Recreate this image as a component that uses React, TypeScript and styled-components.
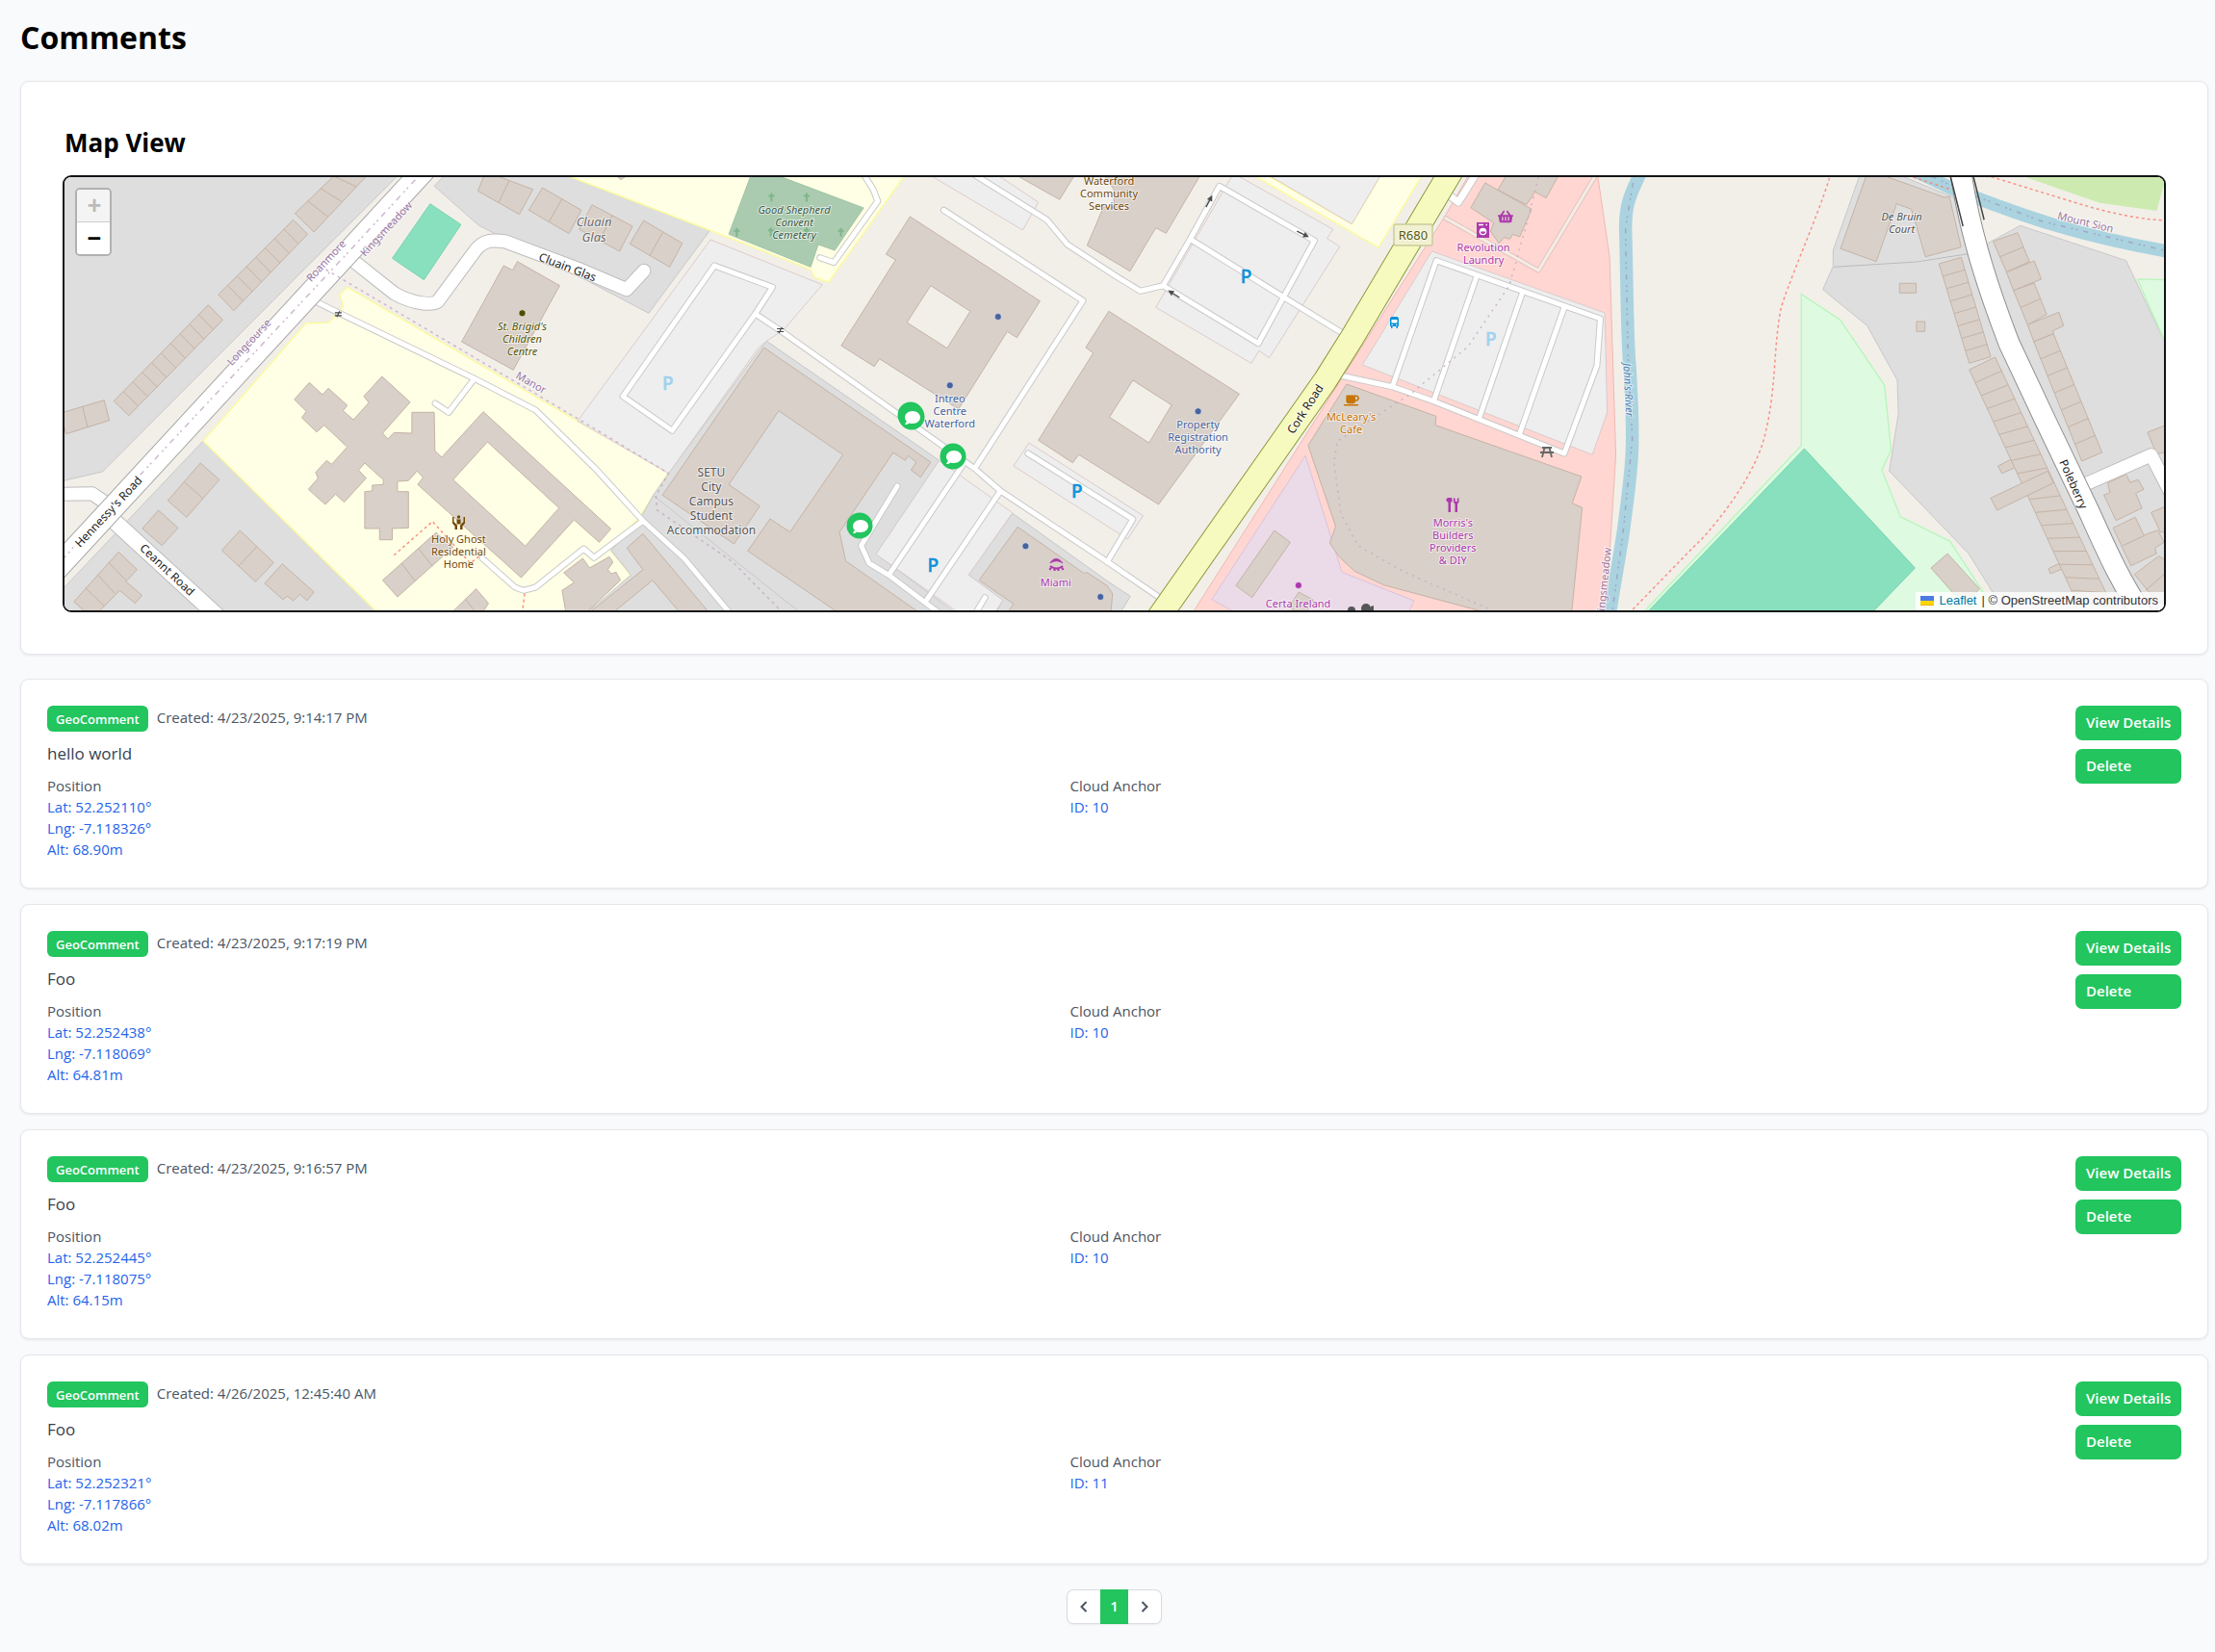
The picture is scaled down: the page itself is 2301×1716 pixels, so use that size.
import React from "react";
import styled, { createGlobalStyle } from "styled-components";
import { FaComment, FaShoppingBasket, FaCoffee } from "react-icons/fa";

/* ---------- page ---------- */

const sans = `"Open Sans", "Noto Sans", sans-serif`;
const green = "#22c55e";

const GlobalStyle = createGlobalStyle`
  *, *::before, *::after { box-sizing: border-box; }
  body { margin: 0; background: #f9fafb; font-family: ${sans}; color: #000; }
  h1, h2, p, ul, dl, dd { margin: 0; padding: 0; }
  button { font-family: inherit; border: 0; cursor: pointer; }
`;

const Page = styled.main`
  min-height: 100vh;
  padding: 18px 7px 28px 21px;
`;

const PageTitle = styled.h1`
  font-size: 32px;
  line-height: 42px;
  font-weight: 700;
  margin-bottom: 24px;
`;

const Card = styled.section`
  background: #fff;
  border: 1px solid #e5e7eb;
  border-radius: 9px;
  box-shadow: 0 1px 3px rgba(0, 0, 0, 0.08);
`;

const MapCard = styled(Card)`
  padding: 43px;
  margin-bottom: 25px;
`;

const MapTitle = styled.h2`
  font-size: 26px;
  line-height: 36px;
  font-weight: 700;
  padding-left: 2px;
  margin: 2px 0 16px;
`;

const MapFrame = styled.div`
  position: relative;
  height: 454px;
  border: 2px solid #111417;
  border-radius: 9px;
  overflow: hidden;
  background: #f2efe9;
`;

const MapCanvas = styled.svg`
  display: block;
  width: 100%;
  height: 100%;
`;

const ZoomControl = styled.div`
  position: absolute;
  top: 11px;
  left: 11px;
  display: flex;
  flex-direction: column;
  border: 2px solid rgba(0, 0, 0, 0.2);
  border-radius: 5px;
  background-clip: padding-box;
  overflow: hidden;
`;

const ZoomButton = styled.button<{ $off?: boolean }>`
  width: 34px;
  height: ${(p) => (p.$off ? 34 : 33)}px;
  padding: 4px 0 0 2px;
  display: flex;
  align-items: center;
  justify-content: center;
  background: ${(p) => (p.$off ? "#f4f4f4" : "#fff")};
  color: ${(p) => (p.$off ? "#bbb" : "#000")};
  border-bottom: ${(p) => (p.$off ? "1px solid #ccc" : "0")};
  font: bold 25px/28px "Liberation Mono", monospace;
`;

const Attribution = styled.div`
  position: absolute;
  right: 0;
  bottom: 0;
  display: flex;
  align-items: center;
  gap: 5px;
  height: 19px;
  padding: 0 6px 2px 5px;
  background: rgba(255, 255, 255, 0.8);
  font: 13px/17px "Liberation Sans", Arial, sans-serif;
  color: #333;
  white-space: pre;
`;

const AttributionLink = styled.a`
  display: inline-flex;
  align-items: center;
  gap: 5px;
  color: #0078a8;
  text-decoration: none;
`;

const CommentList = styled.ul`
  list-style: none;
  display: flex;
  flex-direction: column;
  gap: 16px;
`;

const CommentCard = styled(Card).attrs({ as: "li" })`
  display: flex;
  align-items: flex-start;
  padding: 27px 27px 29px;
`;

const CommentBody = styled.div`
  flex: 1;
  min-width: 0;
`;

const Meta = styled.div`
  display: flex;
  align-items: flex-start;
  gap: 9px;
  margin-bottom: 9px;
  font-size: 15px;
  line-height: 25px;
  color: #4b5563;
`;

const Badge = styled.span`
  padding: 1px 9px 0;
  line-height: 26px;
  border-radius: 6px;
  background: ${green};
  color: #fff;
  font-size: 13px;
  font-weight: 600;
`;

const Message = styled.p`
  font-size: 17px;
  line-height: 27px;
  margin-bottom: 9px;
  color: #374151;
`;

const Facts = styled.dl`
  display: grid;
  grid-template-columns: 1fr 1fr;
  column-gap: 18px;
  font-size: 15px;
  line-height: 22px;
`;

const FactName = styled.dt`
  color: #4b5563;
`;

const FactValue = styled.dd`
  color: #2563eb;
`;

const Actions = styled.div`
  display: flex;
  flex-direction: column;
  gap: 9px;
  width: 110px;
`;

const ActionButton = styled.button`
  height: 36px;
  padding: 0 0 2px 11px;
  text-align: left;
  white-space: nowrap;
  border-radius: 7px;
  background: ${green};
  color: #fff;
  font-size: 15px;
  font-weight: 600;
`;

const Pager = styled.nav`
  display: flex;
  justify-content: center;
  margin-top: 26px;
`;

const PagerBox = styled.div`
  display: flex;
  height: 36px;
  border-radius: 7px;
  box-shadow: 0 1px 2px rgba(0, 0, 0, 0.05);
`;

const PagerArrow = styled.button<{ $side: "left" | "right" }>`
  width: 35px;
  padding: 0;
  display: flex;
  align-items: center;
  justify-content: center;
  background: #fff;
  color: #4b5563;
  border: 1px solid #d9dce3;
  border-${(p) => (p.$side === "left" ? "right" : "left")}: 0;
  border-radius: ${(p) => (p.$side === "left" ? "7px 0 0 7px" : "0 7px 7px 0")};
`;

const PagerPage = styled.button`
  width: 29px;
  padding: 0 0 2px;
  background: ${green};
  color: #fff;
  font-size: 15px;
  font-weight: 600;
`;

/* ---------- map geometry ----------
   The map is digitised on four sheets. A sheet has an origin on the map and a
   horizontal and vertical scale; every "x,y" pair is read on its own sheet. */

type Sheet = { x: number; y: number; sx: number; sy: number };
const A: Sheet = { x: 60, y: 180, sx: 2.8, sy: 3 };
const B: Sheet = { x: 600, y: 180, sx: 2.8, sy: 3 };
const C: Sheet = { x: 1150, y: 180, sx: 2.8, sy: 3 };
const D: Sheet = { x: 1700, y: 180, sx: 2.609, sy: 3 };

const at = (s: Sheet, x: number, y: number) => [
  Math.round((s.x + x / s.sx) * 10) / 10,
  Math.round((s.y + y / s.sy) * 10) / 10,
];

const trace = (s: Sheet, d: string) =>
  d.replace(/(-?[\d.]+),(-?[\d.]+)/g, (_, x, y) => at(s, +x, +y).join(" "));

const area = (s: Sheet, d: string) => "M" + trace(s, d) + "Z";

type AreaProps = { s: Sheet; d: string; fill: string; edge?: string; w?: number };
const Area = ({ s, d, fill, edge = "none", w = 1 }: AreaProps) => (
  <path d={d.split("|").map((p) => area(s, p)).join("")} fill={fill} fillRule="evenodd" stroke={edge} strokeWidth={w} />
);

const Residential = (p: { s: Sheet; d: string }) => <Area {...p} fill="#dedede" edge="#c8c8c8" />;
const School = (p: { s: Sheet; d: string }) => <Area {...p} fill="#ffffe5" edge="#fbfaa0" w={1.5} />;
const Parking = (p: { s: Sheet; d: string }) => <Area {...p} fill="#eeeeee" edge="#dccbcb" />;
const Building = (p: { s: Sheet; d: string }) => <Area {...p} fill="#d9d0c9" edge="#c4b3a6" />;

type LineSet = { s: Sheet; lines: string[] };

const Roads = ({ sets, width, casing = "#c9c9c9", fill = "#fff" }: { sets: LineSet[]; width: number; casing?: string; fill?: string }) => {
  const d = sets.flatMap(({ s, lines }) => lines.map((l) => "M" + trace(s, l))).join("");
  return (
    <g fill="none" strokeLinecap="round" strokeLinejoin="round">
      <path d={d} stroke={casing} strokeWidth={width + 2} />
      <path d={d} stroke={fill} strokeWidth={width} />
    </g>
  );
};

const Boundary = ({ s, d, color = "#c6adc6", dash = "2 4" }: { s: Sheet; d: string; color?: string; dash?: string }) => (
  <path d={"M" + trace(s, d)} fill="none" stroke={color} strokeWidth={1.5} strokeDasharray={dash} opacity={0.85} />
);

/* A terrace of n houses between two long edges, each given start,end. */
type Pt = [number, number];
const Terrace = ({ s, e1, e2, n }: { s: Sheet; e1: [Pt, Pt]; e2: [Pt, Pt]; n: number }) => {
  const mix = (e: [Pt, Pt], t: number) => at(s, e[0][0] + (e[1][0] - e[0][0]) * t, e[0][1] + (e[1][1] - e[0][1]) * t).join(" ");
  let d = `M${mix(e1, 0)}L${mix(e1, 1)} ${mix(e2, 1)} ${mix(e2, 0)}Z`;
  for (let i = 1; i < n; i++) d += `M${mix(e1, i / n)}L${mix(e2, i / n)}`;
  return <path d={d} fill="#d9d0c9" stroke="#c4b3a6" />;
};

const Walls = ({ s, lines }: LineSet) => <path d={lines.map((l) => "M" + trace(s, l)).join("")} stroke="#c4b3a6" fill="none" />;

type LabelProps = {
  s: Sheet; x: number; y: number; text: string[]; color: string;
  size?: number; pitch?: number; turn?: number; italic?: boolean;
};
const Label = ({ s, x, y, text, color, size = 11, pitch = 13, turn = 0, italic }: LabelProps) => {
  const [cx, cy] = at(s, x, y);
  return (
    <text
      transform={`translate(${cx} ${cy}) rotate(${turn})`}
      textAnchor="middle"
      fontFamily='"Noto Sans", "Open Sans", sans-serif'
      fontSize={size}
      fontStyle={italic ? "italic" : "normal"}
      fill={color}
      stroke="rgba(255,255,255,0.6)"
      strokeWidth={2}
      paintOrder="stroke"
    >
      {text.map((t, i) => (
        <tspan key={i} x={0} y={Math.round(size * 0.36) + i * pitch}>{t}</tspan>
      ))}
    </text>
  );
};

const Dot = ({ s, x, y, color = "#4863a0" }: { s: Sheet; x: number; y: number; color?: string }) => {
  const [cx, cy] = at(s, x, y);
  return <circle cx={cx} cy={cy} r={3.5} fill={color} stroke="rgba(255,255,255,0.5)" />;
};

const ParkingSign = ({ s, x, y, pale }: { s: Sheet; x: number; y: number; pale?: boolean }) => {
  const [cx, cy] = at(s, x, y);
  return (
    <text x={cx} y={cy + 7} textAnchor="middle" fontFamily='"Noto Sans", sans-serif' fontSize={19} fontWeight={500}
      fill={pale ? "#9fd2ee" : "#0f92da"} stroke={pale ? "#9fd2ee" : "#0f92da"} strokeWidth={0.5}>P</text>
  );
};

const Gate = ({ s, x, y }: { s: Sheet; x: number; y: number }) => {
  const [cx, cy] = at(s, x, y);
  return <path transform={`translate(${cx} ${cy})`} d="M-3.5 -1.5H3.5M-3.5 1.5H3.5M-1.5 3L1.5 -3" stroke="#444" strokeWidth={1.2} />;
};

const OneWay = ({ s, x, y, turn }: { s: Sheet; x: number; y: number; turn: number }) => {
  const [cx, cy] = at(s, x, y);
  return <path transform={`translate(${cx} ${cy}) rotate(${turn})`} d="M-7 -0.7H1V-3L7 0L1 3V0.7H-7Z" fill="#4d4d4d" />;
};

const Pin = ({ x, y }: { x: number; y: number }) => (
  <g>
    <circle cx={x} cy={y} r={13.5} fill={green} />
    <FaComment x={x - 7} y={y - 7} width={13} height={13} color="#fff" />
  </g>
);

const CROSSES: Pt[] = [[564, 75], [666, 75], [463, 184], [562, 182], [666, 182], [766, 184]];

const purple = "#ac39ac";
const office = "#4863a0";
const brown = "#734a08";
const road = "#222";

const MapDrawing = () => (
  <MapCanvas viewBox="67 184 2181 450" preserveAspectRatio="xMidYMid slice" role="img" aria-label="Map of comment positions">
    <rect x={-1000} y={0} width={4400} height={900} fill="#f2efe9" />

    {/* land use */}
    <Residential s={A} d="0,-10 1005,-10 130,930 0,962" />
    <Residential s={A} d="1140,-10 1095,40 1225,163 1275,190 1400,230 1532,330 1719,436 1897,178 1440,-10" />
    <School s={A} d="1440,-10 1897,178 2190,300 2202,325 2242,340 2475,-10" />
    <Residential s={A} d="423,834 945,1385 0,1385 0,1312" />
    <School s={A} d="842,355 820,378 830,415 790,465 722,467 423,834 945,1385 1530,1385 1667,1252 1609,1175 1692,1072 1777,932 1512,772" />
    <Residential s={B} d="550,523 525,555 265,935 220,1003 180,1080 97,1175 155,1252 10,1385 1120,1385 868,1187 1052,895" />
    <path d={"M" + trace(B, "222,1005 660,1380")} stroke="#c8c8c8" />
    <Residential s={B} d="1265,1060 1137,1252 1237,1330 1210,1385 1570,1385 1608,1318 1540,1270" />
    <Parking s={B} d="387,207 712,347 600,487 550,523 525,545 265,935 0,772" />
    <Parking s={B} d="1052,895 1265,1058 1137,1252 1237,1330 1205,1385 1130,1385 868,1187" />
    <Parking s={B} d="1000,-10 1200,-10 1340,90 1295,177" />
    <Area s={B} d="510,-10 540,-10 832,108 748,240 700,222 678,292 440,190" fill="#aacbaf" edge="#9fc3a5" />
    {CROSSES.map(([x, y], i) => (
      <path key={i} transform={`translate(${at(B, x, y).join(" ")})`} d="M0 -4.5V4.5M-3 -1.5H3" stroke="#7fb58c" strokeWidth={2} />
    ))}
    <School s={C} d="400,-10 790,232 925,-10 805,-10 712,158 440,-10" />
    <Area s={C} d="445,-10 805,-10 712,158" fill="#eeeeee" edge="#dccbcb" />
    <Parking s={C} d="368,0 658,175 640,203 677,228 472,575 442,553 420,592 142,418" />
    <Parking s={C} d="-227,840 -272,912 60,1140 105,1067 0,995" />
    <Area s={C} d="1060,-10 1425,-10 1462,260 1480,880 1450,1385 240,1385 985,130" fill="#ffd6d1" edge="#efb9b0" />
    <Area s={C} d="577,880 683,1243 893,1332 870,1385 400,1385 305,1328" fill="#ebdbe8" edge="#d9c3dc" />
    <Parking s={C} d="945,243 1448,435 1455,745 1412,877 743,597" />

    <Residential s={D} d="610,-10 533,240 533,290 505,362 625,475 707,645 710,750 685,928 900,1185 965,1305 1000,1385 1450,1385 1450,570 1327,272 1040,163 965,210 905,250 860,75 680,-10" />
    <path d={"M" + trace(D, "535,292 760,276 905,250")} fill="none" stroke="#bbb" />
    <Area s={D} d="1000,-10 1440,-10 1410,117 1255,92" fill="#cdebb0" />
    <Area s={D} d="447,377 552,457 672,660 690,862 665,925 715,1070 850,1147 985,1385 5,1385 447,848" fill="#defbe1" edge="#bdf5c0" w={1.5} />
    <Area s={D} d="1358,330 1450,332 1450,570" fill="#defbe1" edge="#bdf5c0" w={1.5} />
    <Area s={D} d="455,858 755,1230 625,1385 15,1385" fill="#88e0be" edge="#7bd3b0" />
    <Area s={A} d="1083,95 1173,160 1065,332 973,265" fill="#88e0be" edge="#7bd3b0" />

    {/* water */}
    <g fill="none" stroke="#aad3df" strokeWidth={13.5}>
      <path d={"M" + trace(C, "1560,-20 C1525,60 1508,90 1508,170 C1512,300 1512,500 1520,600 C1535,850 1530,900 1500,1130 L1455,1420")} />
      <path d={"M" + trace(D, "740,-15 L860,50 C1000,110 1150,185 1450,245")} />
    </g>
    <Boundary s={C} d="1530,30 1508,170 1515,560 1528,830 1500,1130 1470,1362" dash="5 6 2 3 2 6" color="#9d9fc0" />
    <Boundary s={D} d="800,10 915,70 1100,150 1430,240" dash="5 6 2 3 2 6" color="#9d9fc0" />

    {/* buildings: west */}
    <Terrace s={A} e1={[[690, 125], [840, -30]]} e2={[[745, 183], [910, -5]]} n={4} />
    <Terrace s={A} e1={[[685, 145], [467, 378]]} e2={[[727, 190], [512, 428]]} n={8} />
    <Terrace s={A} e1={[[438, 410], [163, 710]]} e2={[[480, 457], [207, 755]]} n={10} />
    <Terrace s={A} e1={[[135, 707], [9, 747]]} e2={[[150, 770], [24, 812]]} n={2} />
    <Terrace s={A} e1={[[415, 903], [320, 1020]]} e2={[[470, 955], [375, 1072]]} n={2} />
    <Building s={A} d="293,1050 350,1105 303,1160 246,1107" />
    <Building s={A} d="177,1180 231,1235 198,1272 245,1315 225,1340 180,1300 115,1372 85,1372 47,1335" />
    <Walls s={A} lines={["147,1212 198,1268", "115,1250 165,1308", "80,1292 135,1348"]} />
    <Terrace s={A} e1={[[530, 1113], [628, 1213]]} e2={[[477, 1175], [575, 1273]]} n={2} />
    <Building s={A} d="653,1217 745,1305 725,1332 705,1312 685,1332 668,1318 655,1328 602,1278" />
    <Terrace s={A} e1={[[1245, -5], [1382, 50]]} e2={[[1222, 55], [1343, 128]]} n={2} />
    <Terrace s={A} e1={[[1410, 45], [1523, 115]]} e2={[[1370, 115], [1487, 188]]} n={2} />
    <Terrace s={B} e1={[[42, 98], [160, 165]]} e2={[[5, 175], [122, 243]]} n={2} />
    <Terrace s={B} e1={[[192, 147], [305, 218]]} e2={[[152, 220], [268, 292]]} n={2} />
    <Building s={A} d="1297,288 1323,302 1337,275 1460,350 1325,613 1175,525" />
    <Building
      s={A}
      d="732,652 770,690 787,670 842,723 830,740 860,768 905,715 890,695 943,633 1025,713 945,810 960,828 978,808 1030,810 1030,745 1095,745 1097,865 1117,885 1238,743 1609,1108 1575,1150 1502,1080 1348,1260 1047,970 1063,948 1045,928 1020,958 988,960 988,992 1020,992 1020,1105 973,1107 973,1142 936,1142 936,1107 893,1107 893,992 915,990 915,972 947,970 947,955 893,903 875,925 897,950 833,1025 808,1000 778,1032 729,985 757,950 750,932 782,895 797,907 842,853 775,785 753,806 710,762 723,742 688,705|1250,837 1458,1043 1360,1162 1150,955"
    />
    <Building s={A} d="1100,1120 1150,1165 988,1320 945,1268" />
    <Walls s={A} lines={["1050,1170 1090,1225", "1000,1215 1040,1272"]} />
    <Building s={A} d="1217,1295 1253,1340 1225,1385 1130,1385" />
    <Walls s={A} lines={["1185,1325 1220,1375"]} />
    <Building s={B} d="15,1200 35,1230 92,1195 103,1212 88,1235 98,1248 112,1243 125,1268 10,1385 -35,1362 -45,1300 -10,1275 -40,1245" />

    {/* buildings: centre */}
    <Building s={B} d="542,543 1027,900 998,947 970,925 985,900 962,880 953,895 918,870 762,1118 780,1208 1015,1385 780,1385 495,1177 560,1077 618,1118 772,877 585,740 440,970 530,1037 455,1155 247,1003" />
    <Building s={B} d="190,1123 395,1385 310,1385 218,1268 85,1385 15,1385 190,1235 143,1168" />
    <Building s={B} d="967,135 1345,398 1278,512 1250,493 1108,735 878,578 863,602 767,537 925,270 897,252|1027,350 1142,430 1075,545 958,465" />
    <Building s={B} d="1250,-10 1455,-10 1402,82" />
    <Building s={B} d="100,-10 170,-10 125,20" />
    <Building s={C} d="-20,-10 20,50 20,105 -10,105 -58,225 67,305 142,170 172,187 280,-10" />
    <Building s={C} d="5,430 385,688 150,1032 -82,877 -100,902 -200,832 -40,560 -62,543|75,645 188,722 122,840 7,760" />
    <Building s={B} d="1280,1102 1475,1248 1480,1243 1540,1285 1556,1310 1550,1385 1240,1385 1268,1342 1168,1268" />

    {/* buildings: retail park */}
    <Building s={C} d="1170,-10 1137,52 1220,98 1245,58 1277,77 1322,-10" />
    <Building s={C} d="1100,30 1235,112 1200,198 1180,190 1172,205 1155,200 1140,218 1115,180 1125,155 1058,107" />
    <Building s={C} d="697,657 957,757 955,785 1380,945 1353,1028 1382,1042 1350,1385 1160,1385 805,1283 720,1240 675,1195 648,1152 665,1100 585,848" />
    <Building s={C} d="487,1113 533,1150 422,1322 375,1285" />
    <Building s={C} d="558,1305 600,1330 570,1385 530,1350" />

    {/* buildings: east */}
    <Building s={D} d="628,-10 553,235 650,275 705,95 745,112 783,260 880,230 848,72 835,75 640,-5" />
    <Building s={D} d="713,343 758,343 758,373 713,373" />
    <Building s={D} d="759,462 782,462 782,493 759,493" />
    <Terrace s={D} e1={[[820, 282], [902, 592]]} e2={[[880, 262], [960, 572]]} n={8} />
    <Building s={D} d="980,912 1075,857 1090,885 1025,918 990,935" />
    <Building s={D} d="1117,1232 1200,1185 1210,1210 1150,1235 1122,1248" />
    <Terrace s={D} e1={[[902, 612], [1195, 1340]]} e2={[[972, 573], [1290, 1350]]} n={18} />
    <Building s={D} d="960,1012 1115,928 1130,965 977,1050" />
    <Terrace s={D} e1={[[967, 212], [1003, 308]]} e2={[[1033, 185], [1065, 275]]} n={2} />
    <Building s={D} d="1003,308 1078,273 1097,330 1022,365" />
    <Terrace s={D} e1={[[1022, 365], [1060, 472]]} e2={[[1078, 342], [1112, 440]]} n={2} />
    <Building s={D} d="1060,472 1145,433 1158,475 1130,490 1130,500 1077,525" />
    <Terrace s={D} e1={[[1077, 525], [1207, 897]]} e2={[[1130, 500], [1262, 870]]} n={7} />
    <Building s={D} d="1277,965 1327,938 1338,963 1360,955 1375,985 1353,997 1370,1043 1300,1082 1267,1003 1283,995" />
    <Building s={D} d="1292,1105 1352,1072 1375,1128 1413,1112 1430,1150 1405,1168 1410,1185 1340,1223" />
    <Walls s={D} lines={["1318,1160 1375,1130"]} />
    <Building s={D} d="1350,1250 1415,1193 1450,1215 1450,1360 1400,1320" />
    <Walls s={D} lines={["1380,1300 1440,1240"]} />
    <Building s={D} d="1395,1057 1450,1030 1450,1120 1420,1118" />
    <Building s={D} d="1385,807 1450,778 1450,865 1410,875" />
    <Building s={D} d="843,1185 930,1295 900,1330 860,1310 798,1230" />

    {/* service roads */}
    <Roads
      width={5}
      sets={[
        { s: A, lines: ["750,400 1212,640 1390,738 1568,925 1702,1083 1822,1200 1970,1390", "1212,640 1137,745 1098,717", "1702,1083 1560,1198 1530,1170 1390,1290 1355,1300 1330,1290 1235,1200"] },
        { s: B, lines: ["830,0 860,50 873,87 745,278 705,263", "398,288 567,355 517,438 275,802 132,695 398,288", "517,438 590,490 1155,920 1230,990 1540,1210 1690,1320", "930,975 825,1160 848,1215 905,1252 1070,1385", "1120,910 905,1252", "1230,990 1015,1330", "1185,1322 1150,1385", "1065,115 1470,397 1155,920", "1140,-5 1365,145 1425,222 1568,322 1637,367 1703,350"] },
        { s: C, lines: ["163,350 242,205 327,40 603,210 440,530 163,350", "242,205 512,385 680,495", "-230,873 75,1078 0,1212", "958,272 830,665", "958,272 1435,453 1425,600 1330,873", "1075,322 950,710", "1208,373 1082,765", "1330,418 1200,812", "678,630 830,665 950,710 1330,873"] },
      ]}
    />
    <Roads width={3} fill="#f4ece6" casing="#e3c4bd" sets={[{ s: C, lines: ["985,140 1255,303 1425,0"] }]} />
    <Roads width={7} sets={[{ s: C, lines: ["1000,72 1022,90 1080,-10"] }]} />

    {/* streets */}
    <Roads width={13} casing="#bdbdbd" sets={[{ s: A, lines: ["862,275 980,375 C1040,410 1090,410 1105,400 L1215,240 C1240,205 1270,208 1300,212 L1512,297 1655,362 1705,304", "0,1000 100,998 150,1035"] }]} />
    <Roads width={16} casing="#bdbdbd" sets={[{ s: A, lines: ["165,1085 470,1385"] }]} />
    <Roads width={13} casing="#bdbdbd" sets={[{ s: D, lines: ["1215,970 1395,878 1445,990"] }]} />
    <Roads width={23} casing="#a8a8a8" sets={[{ s: A, lines: ["1065,-10 545,595 -10,1240"] }]} />
    <Roads width={21} casing="#8f8f8f" sets={[{ s: D, lines: ["878,-10 C905,200 960,380 1010,530 L1110,775 1225,1050 C1280,1190 1310,1270 1385,1400"] }]} />
    <path d={"M" + trace(D, "850,5 885,165") + "M" + trace(D, "912,5 942,145")} stroke="#444" strokeWidth={1.5} fill="none" />
    <Roads width={24} casing="#8e9a3c" fill="#f7fabf" sets={[{ s: C, lines: ["1003,-10 715,508 635,645 140,1400"] }]} />

    {/* boundaries and footpaths */}
    <Boundary s={A} d="1040,20 850,240 240,940" dash="6 5 2 3 2 5" />
    <Boundary s={A} d="45,1165 10,1210" />
    <Boundary s={A} d="780,300 1568,800 1777,935 1740,1005 1744,1050 1962,1210 2102,1362" dash="3 4" />
    <Boundary s={C} d="1255,12 1220,160 1170,350 1050,540 880,690 670,835 660,900 680,1060 730,1160 860,1240 1120,1362" dash="2 5" />
    <Boundary s={A} color="#fa8072" dash="3 3" d="978,1190 1090,1085 1200,1215 1230,1190" />
    <Boundary s={A} color="#fa8072" dash="3 3" d="1358,1310 1352,1362" />
    <Boundary s={D} color="#fa8072" dash="3 3" d="523,15 C490,140 400,370 390,430 C370,560 380,680 345,830 C310,970 190,1130 150,1170 L-70,1430" />
    <Boundary s={D} color="#fa8072" dash="3 3" d="750,12 850,50" />
    <Boundary s={D} color="#fa8072" dash="3 3" d="915,5 965,12 1200,95 C1300,130 1380,145 1430,146" />

    {/* symbols */}
    <Gate s={A} x={816} y={439} />
    <Gate s={B} x={590} y={489} />
    <OneWay s={C} x={297} y={87} turn={-62} />
    <OneWay s={C} x={570} y={190} turn={26} />
    <OneWay s={C} x={194} y={376} turn={212} />
    <ParkingSign s={B} x={263} y={653} pale />
    <ParkingSign s={B} x={1453} y={990} />
    <ParkingSign s={B} x={1034} y={1220} />
    <ParkingSign s={C} x={405} y={322} />
    <ParkingSign s={C} x={1117} y={515} pale />
    <Dot s={A} x={1351} y={436} color="#4d4d00" />
    <Dot s={B} x={1223} y={447} />
    <Dot s={B} x={1083} y={661} />
    <Dot s={B} x={1303} y={1162} />
    <Dot s={B} x={1521} y={1320} />
    <Dot s={C} x={265} y={742} />
    <Dot s={C} x={557} y={1284} color={purple} />
    <FaShoppingBasket x={1556} y={217} width={15} height={14} color={purple} />
    {/* washing machine */}
    <g transform="translate(1534 231)">
      <rect width={13} height={16} fill={purple} />
      <path d="M2 2.5H7M9.5 2.5H11" stroke="#fff" strokeWidth={1.5} />
      <circle cx={6.5} cy={9.5} r={3.8} fill="#fff" />
      <path d="M4 9.5H9A2.5 2.5 0 0 1 4 9.5Z" fill={purple} />
    </g>
    {/* hammer and wrench */}
    <g transform="translate(1502 517)" fill={purple}>
      <path d="M0 2L2 0H6L6.5 1.5V4.5H5V15H2.5V4.5H1.5Z" />
      <path d="M8 0L9.7 1V4H11.8V1L13.5 0V4.5L12 6.5V15H9.5V6.5L8 4.5Z" />
    </g>
    {/* cafe cup */}
    <FaCoffee x={1396} y={408} width={17} height={15} color="#c77400" />
    {/* bus */}
    <g transform="translate(1444 329)" fill="#0092da">
      <path d="M1.5 0H7.5L9 1.5V10H8V12H6.5V10H2.5V12H1V10H0V1.5Z" />
      <path d="M1.5 3H7.5V6.5H1.5ZM1.5 8H3V9H1.5ZM6 8H7.5V9H6Z" fill="#fff" />
    </g>
    {/* picnic table */}
    <path transform="translate(1600 464)" d="M2 1H12M0 6H14M4.5 1L2 11M9.5 1L12 11" stroke="#666" strokeWidth={1.8} fill="none" />
    {/* beauty salon */}
    <g transform="translate(1090 580)" fill="none" stroke={purple}>
      <path d="M1 5C4 -1 10 -1 14 5C10 2 5 2 1 5Z" fill={purple} strokeWidth={1} />
      <path d="M1 8C5 11 10 11 14 8M2 9L0.5 12M5.5 10V13M9.5 10V13M13 9L14.5 12" strokeWidth={2} />
    </g>
    {/* care home */}
    <g transform="translate(470 535)" fill={brown}>
      <circle cx={6.5} cy={2} r={1.7} />
      <path d="M4.5 4.5H8.5V9.5H4.5Z" />
      <path d="M0 2H1.5V7L5 10.5V15H2.5V11.5L0 8.5ZM13 2H11.5V7L8 10.5V15H10.5V11.5L13 8.5Z" />
    </g>
    <g fill="#555"><circle cx={1404} cy={634} r={4} /><circle cx={1419} cy={632} r={5} /><path d="M1424 630l3-1v5h-4z" /></g>

    {/* road shield */}
    <rect x={1448} y={233} width={40} height={22} rx={2} fill="#f1f1d2" stroke="#c9cc9a" strokeWidth={1.5} />
    <Label s={C} x={890} y={193} text={["R680"]} color="#4f5a12" size={13} />

    {/* labels */}
    <Label s={A} x={955} y={173} text={["Kingsmeadow"]} color="#9a75a3" turn={-47} />
    <Label s={A} x={780} y={272} text={["Roanmore"]} color="#9a75a3" turn={-47} />
    <Label s={A} x={556} y={526} text={["Longcourse"]} color="#9a75a3" turn={-47} />
    <Label s={A} x={1377} y={652} text={["Manor"]} color="#9a75a3" turn={30} />
    <Label s={A} x={1483} y={293} text={["Cluain Glas"]} color={road} size={12} turn={21} />
    <Label s={A} x={148} y={1055} text={["Hennessy's Road"]} color={road} size={12} turn={-47} />
    <Label s={A} x={318} y={1236} text={["Ceannt Road"]} color={road} size={12} turn={43} />
    <Label s={A} x={1351} y={478} text={["St. Brigid's", "Children", "Centre"]} color="#555500" italic />
    <Label s={A} x={1166} y={1140} text={["Holy Ghost", "Residential", "Home"]} color={brown} />
    <Label s={B} x={48} y={150} text={["Cluain", "Glas"]} color="#6b6b6b" size={13} pitch={16} italic />
    <Label s={B} x={630} y={113} text={["Good Shepherd", "Convent", "Cemetery"]} color="#3c5a46" italic />
    <Label s={B} x={389} y={934} text={["SETU", "City", "Campus", "Student", "Accommodation"]} color="#555" size={12} pitch={15} />
    <Label s={B} x={1083} y={701} text={["Intreo", "Centre", "Waterford"]} color={office} />
    <Label s={B} x={1391} y={1274} text={["Miami"]} color={purple} />
    <Label s={C} x={6} y={25} text={["Waterford", "Community", "Services"]} color={brown} />
    <Label s={C} x={265} y={784} text={["Property", "Registration", "Authority"]} color={office} />
    <Label s={C} x={1095} y={230} text={["Revolution", "Laundry"]} color={purple} />
    <Label s={C} x={710} y={760} text={["McLeary's", "Cafe"]} color="#c77400" />
    <Label s={C} x={1006} y={1089} text={["Morris's", "Builders", "Providers", "& DIY"]} color={purple} />
    <Label s={C} x={556} y={1340} text={["Certa Ireland"]} color={purple} />
    <Label s={C} x={577} y={735} text={["Cork Road"]} color={road} size={12} turn={-57} />
    <Label s={C} x={1517} y={675} text={["John's River"]} color="#4d80b3" turn={87} italic />
    <Label s={C} x={1445} y={1275} text={["Kingsmeadow"]} color="#9a75a3" turn={-84} />
    <Label s={D} x={719} y={136} text={["De Bruin", "Court"]} color="#555" italic />
    <Label s={D} x={1217} y={152} text={["Mount Sion"]} color="#9a75a3" turn={14} />
    <Label s={D} x={1184} y={969} text={["Poleberry"]} color={road} size={12} turn={66} />

    <Pin x={946} y={431} />
    <Pin x={947} y={433} />
    <Pin x={990} y={474} />
    <Pin x={893} y={546} />
  </MapCanvas>
);

/* ---------- comments ---------- */

type CommentItem = { created: string; text: string; lat: string; lng: string; alt: string; anchor: number };

const COMMENTS: CommentItem[] = [
  { created: "4/23/2025, 9:14:17 PM", text: "hello world", lat: "52.252110", lng: "-7.118326", alt: "68.90", anchor: 10 },
  { created: "4/23/2025, 9:17:19 PM", text: "Foo", lat: "52.252438", lng: "-7.118069", alt: "64.81", anchor: 10 },
  { created: "4/23/2025, 9:16:57 PM", text: "Foo", lat: "52.252445", lng: "-7.118075", alt: "64.15", anchor: 10 },
  { created: "4/26/2025, 12:45:40 AM", text: "Foo", lat: "52.252321", lng: "-7.117866", alt: "68.02", anchor: 11 },
];

const CommentRow = ({ item }: { item: CommentItem }) => (
  <CommentCard>
    <CommentBody>
      <Meta>
        <Badge>GeoComment</Badge>
        <span>Created: {item.created}</span>
      </Meta>
      <Message>{item.text}</Message>
      <Facts>
        <div>
          <FactName>Position</FactName>
          <FactValue>Lat: {item.lat}°</FactValue>
          <FactValue>Lng: {item.lng}°</FactValue>
          <FactValue>Alt: {item.alt}m</FactValue>
        </div>
        <div>
          <FactName>Cloud Anchor</FactName>
          <FactValue>ID: {item.anchor}</FactValue>
        </div>
      </Facts>
    </CommentBody>
    <Actions>
      <ActionButton type="button">View Details</ActionButton>
      <ActionButton type="button">Delete</ActionButton>
    </Actions>
  </CommentCard>
);

const Chevron = ({ d }: { d: string }) => (
  <svg width="8" height="12" viewBox="0 0 8 12" fill="none" stroke="currentColor" strokeWidth="2" aria-hidden="true">
    <path d={d} />
  </svg>
);

export default function App() {
  return (
    <>
      <GlobalStyle />
      <Page>
        <PageTitle>Comments</PageTitle>
        <MapCard>
          <MapTitle>Map View</MapTitle>
          <MapFrame>
            <MapDrawing />
            <ZoomControl>
              <ZoomButton type="button" $off disabled aria-label="Zoom in">+</ZoomButton>
              <ZoomButton type="button" aria-label="Zoom out">−</ZoomButton>
            </ZoomControl>
            <Attribution>
              <AttributionLink href="#leaflet">
                <svg width="14" height="10" viewBox="0 0 14 10" aria-hidden="true">
                  <path fill="#4c7be1" d="M0 0h14v5H0z" />
                  <path fill="#ffd500" d="M0 5h14v4H0z" />
                  <path fill="#e0bc00" d="M0 9h14v1H0z" />
                </svg>
                Leaflet
              </AttributionLink>
              <span>| © OpenStreetMap contributors</span>
            </Attribution>
          </MapFrame>
        </MapCard>
        <CommentList>
          {COMMENTS.map((c) => (
            <CommentRow key={c.created} item={c} />
          ))}
        </CommentList>
        <Pager aria-label="Pages">
          <PagerBox>
            <PagerArrow type="button" $side="left" aria-label="Previous page"><Chevron d="M6.5 1L1.5 6l5 5" /></PagerArrow>
            <PagerPage type="button" aria-current="page">1</PagerPage>
            <PagerArrow type="button" $side="right" aria-label="Next page"><Chevron d="M1.5 1l5 5-5 5" /></PagerArrow>
          </PagerBox>
        </Pager>
      </Page>
    </>
  );
}
